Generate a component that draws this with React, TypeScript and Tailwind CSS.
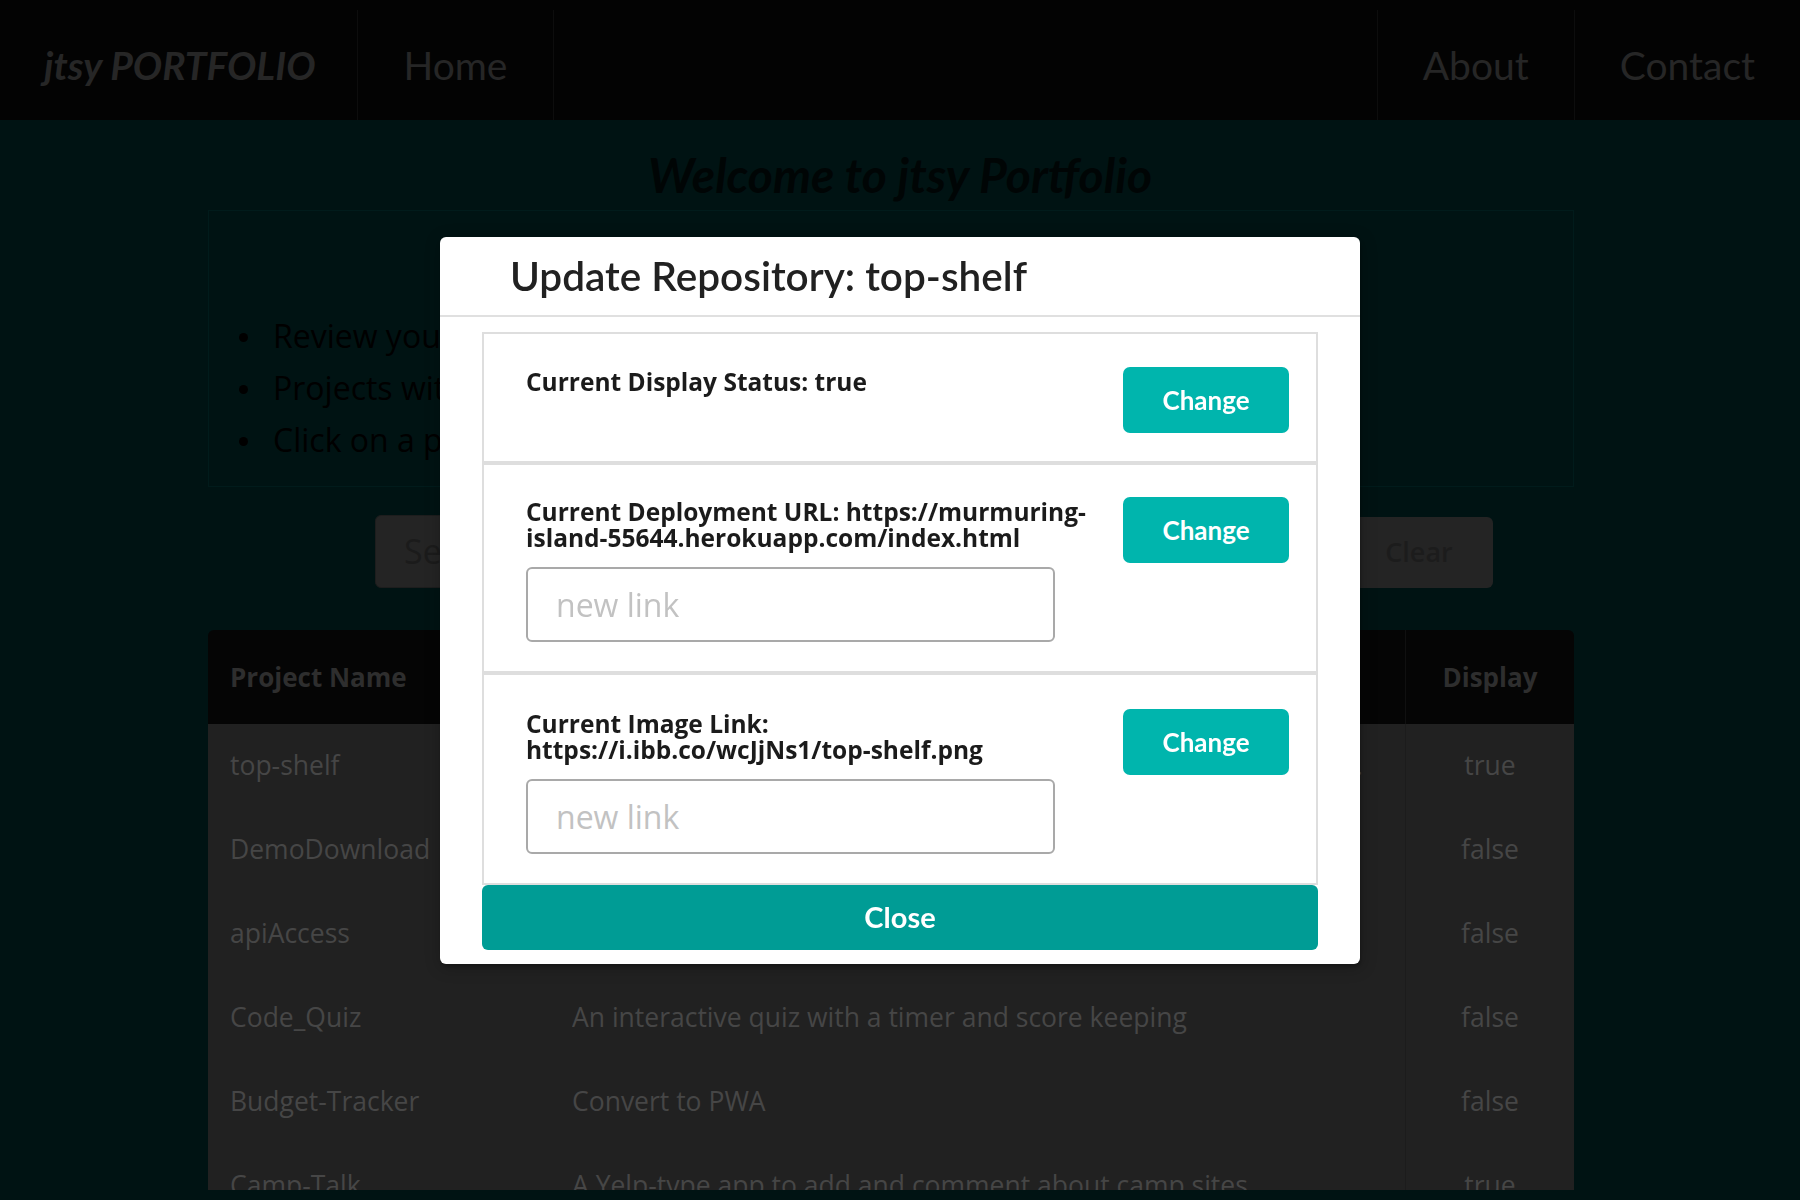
import React from "react";

const rows = [
  { name: "top-shelf", desc: "A full-stack web application for browsing, rating and sharing reviews of top shelf spirits with friends", display: "true" },
  { name: "DemoDownload", desc: "Demo of a file download", display: "false" },
  { name: "apiAccess", desc: "Server side API access", display: "false" },
  { name: "Code_Quiz", desc: "An interactive quiz with a timer and score keeping", display: "false" },
  { name: "Budget-Tracker", desc: "Convert to PWA", display: "false" },
  { name: "Camp-Talk", desc: "A Yelp-type app to add and comment about camp sites", display: "true" },
];

function ChangeButton() {
  return (
    <button className="shrink-0 w-[166px] h-[66px] rounded-[7px] bg-[#00b5ad] text-white font-['Lato',sans-serif] font-bold text-[26px] leading-none">
      Change
    </button>
  );
}

function LinkInput() {
  return (
    <input
      placeholder="new link"
      className="mt-[16px] block w-[529px] h-[75px] border-2 border-[#a9a9a9] rounded-[6px] pl-[28px] bg-white font-['Open_Sans',sans-serif] text-[32px] text-[#222] placeholder:text-[#c2c2c2] outline-none"
    />
  );
}

export default function App() {
  return (
    <div className="relative w-full h-[1200px] overflow-hidden bg-[#001313] font-['Open_Sans',sans-serif]">
      {/* Nav */}
      <nav className="h-[120px] bg-[#030303] flex font-['Lato',sans-serif] text-[#262626]">
        <div className="pt-[10px] pl-[44px] pr-[41px] flex items-center text-[39px] font-bold italic">jtsy PORTFOLIO</div>
        <div className="mt-[10px] w-px bg-[#0d0d0d]" />
        <div className="pt-[10px] px-[46px] flex items-center text-[39px]">Home</div>
        <div className="mt-[10px] w-px bg-[#0d0d0d]" />
        <div className="flex-1" />
        <div className="mt-[10px] w-px bg-[#0d0d0d]" />
        <div className="pt-[10px] px-[45px] flex items-center text-[39px]">About</div>
        <div className="mt-[10px] w-px bg-[#0d0d0d]" />
        <div className="pt-[10px] px-[45px] flex items-center text-[39px]">Contact</div>
      </nav>

      {/* Heading */}
      <h1 className="mt-[26px] text-center font-['Lato',sans-serif] font-bold italic text-[48px] leading-[57px] text-[#000505]">
        Welcome to jtsy Portfolio
      </h1>

      {/* Instructions box */}
      <div className="mt-[7px] ml-[208px] w-[1366px] border border-[#011b1b] pt-[99px] pb-[20px] pl-[30px]">
        <ul className="text-[32px] leading-[52px] text-black">
          {[
            "Review your GitHub repositories below",
            "Projects with display set to true will show in the portfolio",
            "Click on a project to update display status, deployment link, or image link",
          ].map((t) => (
            <li key={t} className="flex items-start">
              <span className="mt-[23px] w-[9px] h-[9px] rounded-full bg-black shrink-0" />
              <span className="ml-[25px]">{t}</span>
            </li>
          ))}
        </ul>
      </div>

      {/* Search row */}
      <div className="mt-[28px] ml-[375px] flex items-start gap-[15px]">
        <div className="w-[740px] h-[73px] rounded-[6px] bg-[#242424] border border-[#1d1d1d] flex items-center pl-[28px] text-[34px] text-[#1b1b1b]">
          Search projects
        </div>
        <div className="mt-[2px] w-[200px] h-[71px] rounded-[6px] bg-[#242424] flex items-center justify-center text-[27px] font-semibold text-[#1c1c1c]">
          Search
        </div>
        <div className="mt-[2px] w-[148px] h-[71px] rounded-[6px] bg-[#242424] flex items-center justify-center text-[27px] font-semibold text-[#1c1c1c]">
          Clear
        </div>
      </div>

      {/* Table */}
      <div className="mt-[42px] ml-[208px] w-[1366px] h-[560px] overflow-hidden rounded-t-[6px]">
        <div className="h-[94px] bg-[#050505] flex text-[26px] font-bold text-[#2e2e2e]">
          <div className="w-[342px] pl-[22px] flex items-center">Project Name</div>
          <div className="flex-1 pl-[22px] flex items-center border-l border-[#0f0f0f]">Description</div>
          <div className="w-[169px] flex items-center justify-center border-l border-[#101010]">Display</div>
        </div>
        {rows.map((r) => (
          <div key={r.name} className="h-[84px] bg-[#212121] flex text-[26.5px] text-[#464646]">
            <div className="w-[342px] pl-[22px] flex items-center">{r.name}</div>
            <div className="flex-1 min-w-0 pl-[22px] pr-[30px] flex items-center">
              <span className="truncate">{r.desc}</span>
            </div>
            <div className="w-[169px] flex items-center justify-center border-l border-[#1c1c1c]">{r.display}</div>
          </div>
        ))}
      </div>

      {/* Modal */}
      <div className="fixed inset-0 flex items-center justify-center">
        <div className="w-[920px] bg-white rounded-[6px] shadow-[1px_3px_3px_0_rgba(0,0,0,0.2),1px_3px_15px_2px_rgba(0,0,0,0.2)]">
          <div className="h-[80px] flex items-center pl-[70px] border-b-2 border-[#e0e0e0]">
            <h2 className="font-['Lato',sans-serif] font-semibold text-[40.5px] leading-[47px] text-[#212121]">
              Update Repository: top-shelf
            </h2>
          </div>
          <div className="px-[42px] pt-[15px] pb-[14px] font-['Lato',sans-serif]">
            <div className="border-2 border-[#dedede] pt-[33px] pb-[28px] pl-[42px] pr-[27px] flex justify-between">
              <div className="pt-[2px] font-['Open_Sans',sans-serif] font-bold text-[24.5px] leading-[26px] text-[#1b1b1b]">
                Current Display Status: true
              </div>
              <ChangeButton />
            </div>
            <div className="border-2 border-[#dedede] pt-[32px] pb-[29px] pl-[42px] pr-[27px] flex justify-between">
              <div className="pt-[2px]">
                <div className="font-['Open_Sans',sans-serif] font-bold text-[24.5px] leading-[26px] text-[#1b1b1b] whitespace-nowrap">
                  Current Deployment URL: https://murmuring-
                  <br />
                  island-55644.herokuapp.com/index.html
                </div>
                <LinkInput />
              </div>
              <ChangeButton />
            </div>
            <div className="border-2 border-[#dedede] pt-[34px] pb-[29px] pl-[42px] pr-[27px] flex justify-between">
              <div className="pt-[2px]">
                <div className="font-['Open_Sans',sans-serif] font-bold text-[24.5px] leading-[26px] text-[#1b1b1b] whitespace-nowrap">
                  Current Image Link:
                  <br />
                  https://i.ibb.co/wcJjNs1/top-shelf.png
                </div>
                <LinkInput />
              </div>
              <ChangeButton />
            </div>
            <button className="block w-full h-[65px] rounded-[6px] bg-[#009c95] text-white font-bold text-[29px]">
              Close
            </button>
          </div>
        </div>
      </div>
    </div>
  );
}
